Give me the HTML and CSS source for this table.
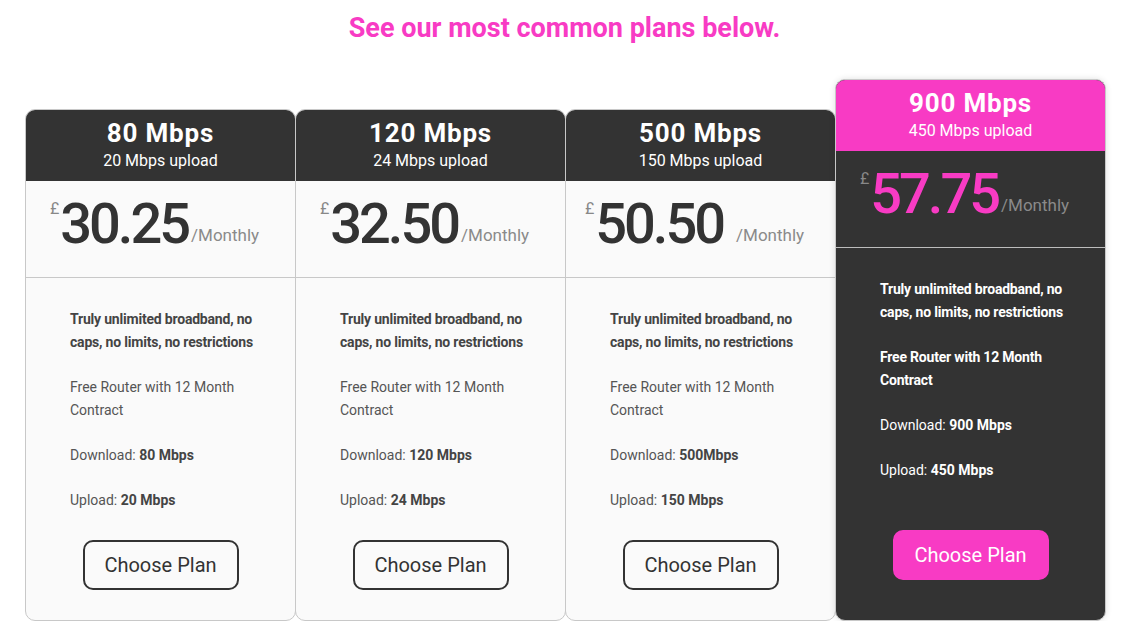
FILE: index.html
```html
<!DOCTYPE html>
<html lang="en">
<head>
<meta charset="utf-8">
<title>Plans</title>
<link rel="stylesheet" href="styles.css">
</head>
<body>
<h1 class="heading">See our most common plans below.</h1>
<div class="plans">
  <div class="card">
    <div class="card-head">
      <div class="speed">80 Mbps</div>
      <div class="upload">20 Mbps upload</div>
    </div>
    <div class="price"><span class="cur">£</span><span class="amount">30.25</span><span class="per">/Monthly</span></div>
    <ul class="features">
      <li class="strong">Truly unlimited broadband, no caps, no limits, no restrictions</li>
      <li>Free Router with 12 Month Contract</li>
      <li>Download: <b>80 Mbps</b></li>
      <li>Upload: <b>20 Mbps</b></li>
    </ul>
    <div class="action"><a class="btn" href="#">Choose Plan</a></div>
  </div>
  <div class="card">
    <div class="card-head">
      <div class="speed">120 Mbps</div>
      <div class="upload">24 Mbps upload</div>
    </div>
    <div class="price"><span class="cur">£</span><span class="amount">32.50</span><span class="per">/Monthly</span></div>
    <ul class="features">
      <li class="strong">Truly unlimited broadband, no caps, no limits, no restrictions</li>
      <li>Free Router with 12 Month Contract</li>
      <li>Download: <b>120 Mbps</b></li>
      <li>Upload: <b>24 Mbps</b></li>
    </ul>
    <div class="action"><a class="btn" href="#">Choose Plan</a></div>
  </div>
  <div class="card">
    <div class="card-head">
      <div class="speed">500 Mbps</div>
      <div class="upload">150 Mbps upload</div>
    </div>
    <div class="price"><span class="cur">£</span><span class="amount">50.50</span><span class="per spaced">/Monthly</span></div>
    <ul class="features">
      <li class="strong">Truly unlimited broadband, no caps, no limits, no restrictions</li>
      <li>Free Router with 12 Month Contract</li>
      <li>Download: <b>500Mbps</b></li>
      <li>Upload: <b>150 Mbps</b></li>
    </ul>
    <div class="action"><a class="btn" href="#">Choose Plan</a></div>
  </div>
  <div class="card featured">
    <div class="card-head">
      <div class="speed">900 Mbps</div>
      <div class="upload">450 Mbps upload</div>
    </div>
    <div class="price"><span class="cur">£</span><span class="amount">57.75</span><span class="per">/Monthly</span></div>
    <ul class="features">
      <li class="strong">Truly unlimited broadband, no caps, no limits, no restrictions</li>
      <li class="strong">Free Router with 12 Month Contract</li>
      <li>Download: <b>900 Mbps</b></li>
      <li>Upload: <b>450 Mbps</b></li>
    </ul>
    <div class="action"><a class="btn" href="#">Choose Plan</a></div>
  </div>
</div>
</body>
</html>
```

FILE: styles.css
```css
* { box-sizing: border-box; }

body {
  margin: 0;
  background: #ffffff;
  font-family: Roboto, "Liberation Sans", sans-serif;
  color: #333333;
}

.heading {
  margin: 0;
  padding-top: 12px;
  text-align: center;
  font-size: 27px;
  line-height: 32px;
  font-weight: 700;
  color: #f83bc4;
}

.plans {
  display: flex;
  align-items: flex-end;
  padding: 35px 0 0 25px;
}

.card {
  width: 271px;
  margin-left: -1px;
  background: #fafafa;
  border: 1px solid #c8c8c8;
  border-radius: 10px;
  overflow: hidden;
  display: flex;
  flex-direction: column;
}

.card:first-child { margin-left: 0; }

.card-head {
  background: #333333;
  color: #ffffff;
  text-align: center;
  padding: 7px 0 8px;
}

.speed {
  font-size: 26px;
  line-height: 32px;
  font-weight: 700;
  letter-spacing: 0.8px;
}

.upload {
  font-size: 16px;
  line-height: 24px;
}

.price {
  height: 97px;
  padding-top: 15px;
  padding-right: 12px;
  text-align: center;
  border-bottom: 1px solid #c8c8c8;
  white-space: nowrap;
  line-height: 56px;
}

.cur {
  display: inline-block;
  vertical-align: top;
  padding-top: 5px;
  font-size: 16px;
  line-height: 16px;
  color: #888888;
}

.amount {
  font-size: 56px;
  letter-spacing: -3px;
  font-weight: 500;
  color: #333333;
  margin-left: 1px;
}

.per {
  font-size: 17px;
  color: #8a8a8a;
  margin-left: 3px;
  vertical-align: 2px;
}

.per.spaced { margin-left: 13px; }

.features {
  list-style: none;
  margin: 0;
  padding: 30px 12px 0 44px;
  font-size: 14px;
  line-height: 23px;
  color: #555555;
}

.features li { margin-bottom: 22px; }
.features li:last-child { margin-bottom: 0; }
.features li.strong { font-weight: 700; color: #444444; letter-spacing: -0.2px; }
.features b { font-weight: 700; color: #444444; }

.action {
  display: flex;
  justify-content: center;
  padding: 28px 0 30px;
}

.btn {
  display: flex;
  align-items: center;
  justify-content: center;
  width: 156px;
  height: 50px;
  border: 2px solid #333333;
  border-radius: 10px;
  font-size: 20px;
  color: #333333;
  text-decoration: none;
}

.featured {
  background: #333333;
  box-shadow: 0 0 6px rgba(0, 0, 0, 0.12);
}

.featured .card-head { background: #f83bc4; }
.featured .price { border-bottom-color: #bdbdbd; }
.featured .amount { color: #f83bc4; }
.featured .features,
.featured .features li.strong,
.featured .features b { color: #ffffff; }

.featured .action { padding: 48px 0 40px; }

.featured .btn {
  background: #f83bc4;
  border-color: #f83bc4;
  color: #ffffff;
}
```
